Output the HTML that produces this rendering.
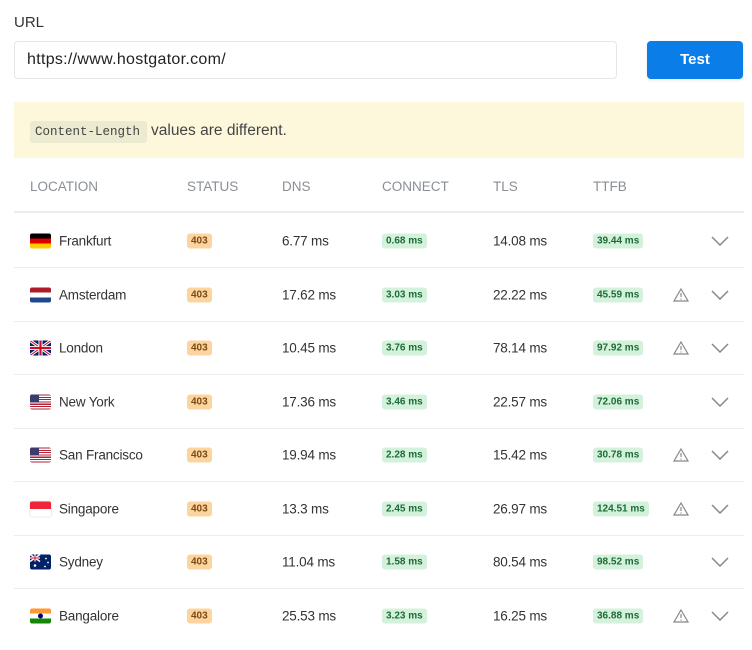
<!DOCTYPE html>
<html><head><meta charset="utf-8"><style>
*{box-sizing:border-box;margin:0;padding:0}
body{width:752px;height:650px;background:#fff;font-family:"Liberation Sans",sans-serif;color:#333;position:relative;overflow:hidden}
.abs{position:absolute}
.lbl{left:14px;top:14px;font-size:15px;color:#333}
.inp{left:14px;top:41px;width:603px;height:38px;border:1px solid #e6e6e6;border-radius:4px;font-size:16px;padding:9px 12px;color:#222;letter-spacing:.3px}
.btn{left:647px;top:41px;width:96px;height:38px;background:#0b7de9;border-radius:4px;color:#fff;font-weight:bold;font-size:15px;text-align:center;line-height:38px;box-shadow:0 1px 3px rgba(0,0,0,.1)}
.warn{left:14px;top:102px;width:730px;height:56px;background:#fdf8dc;font-size:15.5px;color:#444}
.code{position:absolute;left:16px;top:19px;width:117px;background:#ecebd2;border-radius:3px;font-family:"Liberation Mono",monospace;font-size:12.5px;padding:4px 5px;color:#444;white-space:nowrap}
.wt{position:absolute;left:137px;top:20px}
.hd{top:179px;font-size:13.5px;color:#8a8f96}
.hline{left:14px;top:211px;width:730px;height:2px;background:#ebebeb}
.row{position:absolute;left:14px;width:730px;height:54px;border-bottom:1px solid #ececec}
.row div{position:absolute;top:50%;transform:translateY(-50%)}
.nm{left:45px;font-size:13.5px;color:#333;letter-spacing:-.2px}
.flag{left:16px;width:21px;height:15px;border-radius:2px;overflow:hidden}
.st{left:173px;background:#fdd49f;color:#7a4a10;font-size:10px;font-weight:bold;padding:2px 4px;border-radius:3px}
.t{font-size:13.5px;color:#333;letter-spacing:-.2px}
.g{background:#d4f1dc;color:#1d6b34;font-size:10px;font-weight:bold;padding:2px 4px;border-radius:3px}
svg{display:block}
</style></head><body>
<div class="abs lbl">URL</div>
<div class="abs inp">https://www.hostgator.com/</div>
<div class="abs btn">Test</div>
<div class="abs warn"><span class="code">Content-Length</span><span class="wt">values are different.</span></div>
<div class="abs hd" style="left:30px">LOCATION</div>
<div class="abs hd" style="left:187px">STATUS</div>
<div class="abs hd" style="left:282px">DNS</div>
<div class="abs hd" style="left:382px">CONNECT</div>
<div class="abs hd" style="left:493px">TLS</div>
<div class="abs hd" style="left:593px">TTFB</div>
<div class="abs hline"></div>

<div class="row" style="top:214px">
<div class="flag" style="background:linear-gradient(#000 0 33%,#d00 33% 66%,#fc0 66%)"></div>
<div class="nm">Frankfurt</div><div class="st">403</div>
<div class="t" style="left:268px">6.77 ms</div><div class="g" style="left:368px">0.68 ms</div>
<div class="t" style="left:479px">14.08 ms</div><div class="g" style="left:579px">39.44 ms</div>
<div style="left:697px"><svg width="18" height="10"><path d="M1 1l8 8 8-8" fill="none" stroke="#888" stroke-width="1.5"/></svg></div>
</div>
<div class="row" style="top:268px">
<div class="flag" style="background:linear-gradient(#ae1c28 0 33%,#fff 33% 66%,#21468b 66%)"></div>
<div class="nm">Amsterdam</div><div class="st">403</div>
<div class="t" style="left:268px">17.62 ms</div><div class="g" style="left:368px">3.03 ms</div>
<div class="t" style="left:479px">22.22 ms</div><div class="g" style="left:579px">45.59 ms</div>
<div style="left:659px"><svg width="16" height="14"><path d="M8 1L15 13H1Z M8 5v4 M8 10.5v1" fill="none" stroke="#888" stroke-width="1.2"/></svg></div>
<div style="left:697px"><svg width="18" height="10"><path d="M1 1l8 8 8-8" fill="none" stroke="#888" stroke-width="1.5"/></svg></div>
</div>
<div class="row" style="top:321px">
<div class="flag"><svg width="21" height="15"><rect width="21" height="15" fill="#012169"/><path d="M0 0L21 15M21 0L0 15" stroke="#fff" stroke-width="3"/><path d="M0 0L21 15M21 0L0 15" stroke="#c8102e" stroke-width="1"/><path d="M10.5 0v15M0 7.5h21" stroke="#fff" stroke-width="4"/><path d="M10.5 0v15M0 7.5h21" stroke="#c8102e" stroke-width="2.2"/></svg></div>
<div class="nm">London</div><div class="st">403</div>
<div class="t" style="left:268px">10.45 ms</div><div class="g" style="left:368px">3.76 ms</div>
<div class="t" style="left:479px">78.14 ms</div><div class="g" style="left:579px">97.92 ms</div>
<div style="left:659px"><svg width="16" height="14"><path d="M8 1L15 13H1Z M8 5v4 M8 10.5v1" fill="none" stroke="#888" stroke-width="1.2"/></svg></div>
<div style="left:697px"><svg width="18" height="10"><path d="M1 1l8 8 8-8" fill="none" stroke="#888" stroke-width="1.5"/></svg></div>
</div>
<div class="row" style="top:375px">
<div class="flag" style="background:repeating-linear-gradient(#b22234 0 1.15px,#fff 1.15px 2.3px)"><div style="position:absolute;left:0;top:0;transform:none;width:9px;height:8px;background:#3c3b6e"></div></div>
<div class="nm">New York</div><div class="st">403</div>
<div class="t" style="left:268px">17.36 ms</div><div class="g" style="left:368px">3.46 ms</div>
<div class="t" style="left:479px">22.57 ms</div><div class="g" style="left:579px">72.06 ms</div>
<div style="left:697px"><svg width="18" height="10"><path d="M1 1l8 8 8-8" fill="none" stroke="#888" stroke-width="1.5"/></svg></div>
</div>
<div class="row" style="top:428px">
<div class="flag" style="background:repeating-linear-gradient(#b22234 0 1.15px,#fff 1.15px 2.3px)"><div style="position:absolute;left:0;top:0;transform:none;width:9px;height:8px;background:#3c3b6e"></div></div>
<div class="nm">San Francisco</div><div class="st">403</div>
<div class="t" style="left:268px">19.94 ms</div><div class="g" style="left:368px">2.28 ms</div>
<div class="t" style="left:479px">15.42 ms</div><div class="g" style="left:579px">30.78 ms</div>
<div style="left:659px"><svg width="16" height="14"><path d="M8 1L15 13H1Z M8 5v4 M8 10.5v1" fill="none" stroke="#888" stroke-width="1.2"/></svg></div>
<div style="left:697px"><svg width="18" height="10"><path d="M1 1l8 8 8-8" fill="none" stroke="#888" stroke-width="1.5"/></svg></div>
</div>
<div class="row" style="top:482px">
<div class="flag" style="background:linear-gradient(#ee2536 0 50%,#fff 50%);box-shadow:0 0 0 1px #eee"></div>
<div class="nm">Singapore</div><div class="st">403</div>
<div class="t" style="left:268px">13.3 ms</div><div class="g" style="left:368px">2.45 ms</div>
<div class="t" style="left:479px">26.97 ms</div><div class="g" style="left:579px">124.51 ms</div>
<div style="left:659px"><svg width="16" height="14"><path d="M8 1L15 13H1Z M8 5v4 M8 10.5v1" fill="none" stroke="#888" stroke-width="1.2"/></svg></div>
<div style="left:697px"><svg width="18" height="10"><path d="M1 1l8 8 8-8" fill="none" stroke="#888" stroke-width="1.5"/></svg></div>
</div>
<div class="row" style="top:535px">
<div class="flag"><svg width="21" height="15"><rect width="21" height="15" fill="#012169"/><path d="M0 0L10 7M10 0L0 7" stroke="#fff" stroke-width="1.5"/><path d="M5 0v7M0 3.5h10" stroke="#fff" stroke-width="2"/><path d="M5 0v7M0 3.5h10" stroke="#c8102e" stroke-width="1"/><circle cx="5" cy="11" r="1.3" fill="#fff"/><circle cx="16" cy="4" r=".9" fill="#fff"/><circle cx="18" cy="8" r=".9" fill="#fff"/><circle cx="15" cy="12" r=".9" fill="#fff"/></svg></div>
<div class="nm">Sydney</div><div class="st">403</div>
<div class="t" style="left:268px">11.04 ms</div><div class="g" style="left:368px">1.58 ms</div>
<div class="t" style="left:479px">80.54 ms</div><div class="g" style="left:579px">98.52 ms</div>
<div style="left:697px"><svg width="18" height="10"><path d="M1 1l8 8 8-8" fill="none" stroke="#888" stroke-width="1.5"/></svg></div>
</div>
<div class="row" style="top:589px;border-bottom:none">
<div class="flag" style="background:linear-gradient(#f93 0 33%,#fff 33% 66%,#138808 66%)"><div style="position:absolute;left:8px;top:5px;transform:none;width:5px;height:5px;border-radius:50%;background:#000080"></div></div>
<div class="nm">Bangalore</div><div class="st">403</div>
<div class="t" style="left:268px">25.53 ms</div><div class="g" style="left:368px">3.23 ms</div>
<div class="t" style="left:479px">16.25 ms</div><div class="g" style="left:579px">36.88 ms</div>
<div style="left:659px"><svg width="16" height="14"><path d="M8 1L15 13H1Z M8 5v4 M8 10.5v1" fill="none" stroke="#888" stroke-width="1.2"/></svg></div>
<div style="left:697px"><svg width="18" height="10"><path d="M1 1l8 8 8-8" fill="none" stroke="#888" stroke-width="1.5"/></svg></div>
</div>
</body></html>
